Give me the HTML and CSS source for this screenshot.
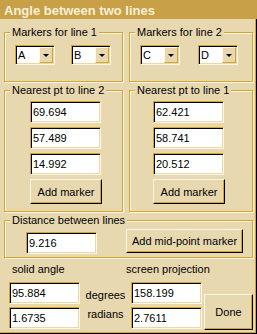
FILE: index.html
```html
<!DOCTYPE html>
<html lang="en">
<head>
    <meta charset="UTF-8">
    <meta name="viewport" content="width=device-width, initial-scale=1.0">
    <title>Angle between two lines</title>
    <link rel="stylesheet" href="styles.css">
</head>
<body>
    <div class="window">
        <div class="titlebar">Angle between two lines</div>

        <div class="row row-top">
            <fieldset class="group group-left markers">
                <legend>Markers for line 1</legend>
                <div class="combos">
                    <div class="combo"><span class="combo-value">A</span><span class="combo-btn"><span class="arrow"></span></span></div>
                    <div class="combo"><span class="combo-value">B</span><span class="combo-btn"><span class="arrow"></span></span></div>
                </div>
            </fieldset>
            <fieldset class="group group-right markers">
                <legend>Markers for line 2</legend>
                <div class="combos">
                    <div class="combo"><span class="combo-value">C</span><span class="combo-btn"><span class="arrow"></span></span></div>
                    <div class="combo"><span class="combo-value">D</span><span class="combo-btn"><span class="arrow"></span></span></div>
                </div>
            </fieldset>
        </div>

        <div class="row row-mid">
            <fieldset class="group group-left nearest">
                <legend>Nearest pt to line 2</legend>
                <div class="coords">
                    <input class="field" type="text" value="69.694">
                    <input class="field" type="text" value="57.489">
                    <input class="field" type="text" value="14.992">
                    <button class="btn btn-marker" type="button">Add marker</button>
                </div>
            </fieldset>
            <fieldset class="group group-right nearest">
                <legend>Nearest pt to line 1</legend>
                <div class="coords">
                    <input class="field" type="text" value="62.421">
                    <input class="field" type="text" value="58.741">
                    <input class="field" type="text" value="20.512">
                    <button class="btn btn-marker" type="button">Add marker</button>
                </div>
            </fieldset>
        </div>

        <div class="row row-mid">
            <fieldset class="group distance">
                <legend>Distance between lines</legend>
                <div class="distance-body">
                    <input class="field" type="text" value="9.216">
                    <button class="btn btn-mid" type="button">Add mid-point marker</button>
                </div>
            </fieldset>
        </div>

        <div class="angles">
            <div class="caption caption-solid">solid angle</div>
            <div></div>
            <div class="caption caption-screen">screen projection</div>

            <input class="field field-a1" type="text" value="95.884">
            <div class="unit unit-deg">degrees</div>
            <input class="field field-a2" type="text" value="158.199">

            <input class="field field-b1" type="text" value="1.6735">
            <div class="unit unit-rad">radians</div>
            <input class="field field-b2" type="text" value="2.7611">

            <button class="btn btn-done" type="button">Done</button>
        </div>
    </div>
</body>
</html>
```

FILE: styles.css
```css
body {
    margin: 0;
    font-family: "Liberation Sans", Arial, sans-serif;
    font-size: 11px;
    color: #000;
    background-color: #E8D8B0;
}

.window {
    width: 257px;
    height: 334px;
    box-sizing: border-box;
    background-color: #E8D8B0;
    box-shadow: inset -1px -1px 0 #000, inset -2px -2px 0 #D4A52A;
    overflow: hidden;
}

.titlebar {
    height: 19px;
    box-sizing: border-box;
    padding: 3px 0 0 4px;
    background-color: #C8A048;
    color: #F8F0D8;
    font-size: 13px;
    font-weight: bold;
    line-height: 16px;
}

.row {
    display: flex;
    gap: 6px;
    padding: 0 4px;
}

.row-top {
    margin-top: 7px;
}

.row-mid {
    margin-top: 2px;
}

/* etched group boxes */
.group {
    margin: 0;
    min-width: 0;
    box-sizing: border-box;
    border: 1px solid #D4A52A;
    box-shadow: inset 1px 1px 0 #FFF8E8, 1px 1px 0 #FFF8E8;
    padding: 0 5px;
}

.group legend {
    padding: 0 2px;
    line-height: 13px;
    background-color: #E8D8B0;
}

.group-left {
    width: 119px;
}

.group-right {
    width: 124px;
}

.markers {
    padding-top: 6px;
    padding-bottom: 16px;
}

.nearest {
    padding-top: 4px;
    padding-bottom: 7px;
}

.distance {
    width: 249px;
    padding-top: 2px;
    padding-bottom: 3px;
}

/* combo boxes */
.combos {
    display: flex;
    gap: 16px;
    padding-left: 5px;
}

.group-right .combos {
    gap: 18px;
}

.combo {
    width: 40px;
    height: 20px;
    box-sizing: border-box;
    display: flex;
    padding: 1px;
    background-color: #fff;
    border: 1px solid;
    border-color: #D4A52A #FFF8E8 #FFF8E8 #D4A52A;
    box-shadow: inset 1px 1px 0 #000, inset -1px -1px 0 #E8D8B0;
}

.combo-value {
    flex: 1;
    padding-left: 1px;
    line-height: 16px;
}

.combo-btn {
    width: 14px;
    box-sizing: border-box;
    display: flex;
    align-items: center;
    justify-content: center;
    background-color: #E8D8B0;
    border: 1px solid;
    border-color: #FFF8E8 #D4A52A #D4A52A #FFF8E8;
}

.arrow {
    width: 0;
    height: 0;
    border-left: 3px solid transparent;
    border-right: 3px solid transparent;
    border-top: 3px solid #000;
}

/* text fields */
.field {
    width: 71px;
    height: 22px;
    margin: 0;
    box-sizing: border-box;
    padding: 0 2px;
    font: inherit;
    color: #000;
    background-color: #fff;
    border: 1px solid;
    border-color: #D4A52A #FFF8E8 #FFF8E8 #D4A52A;
    box-shadow: inset 1px 1px 0 #000, inset -1px -1px 0 #E8D8B0;
    outline: none;
}

.coords {
    display: flex;
    flex-direction: column;
    align-items: flex-start;
    gap: 4px;
    padding-left: 20px;
}

.group-right .coords {
    padding-left: 18px;
}

/* buttons */
.btn {
    box-sizing: border-box;
    margin: 0;
    padding: 0;
    font: inherit;
    color: #000;
    background-color: #E8D8B0;
    border: 1px solid;
    border-color: #FFF8E8 #000 #000 #FFF8E8;
    box-shadow: inset -1px -1px 0 #D4A52A;
    cursor: pointer;
}

.btn-marker {
    width: 72px;
    height: 25px;
}

.distance-body {
    display: flex;
    align-items: flex-start;
    padding-left: 16px;
}

.distance-body .field {
    margin-top: 3px;
}

.btn-mid {
    width: 117px;
    height: 24px;
    margin-left: 29px;
}

/* angle readouts */
.angles {
    display: grid;
    grid-template-columns: 71px 51px 71px 2px 49px;
    grid-template-rows: 16px 22px 22px;
    row-gap: 3px;
    padding: 5px 0 0 9px;
}

.caption {
    line-height: 13px;
    white-space: nowrap;
}

.caption-solid {
    padding-left: 3px;
}

.caption-screen {
    margin-left: -5px;
}

.unit {
    text-align: center;
    line-height: 13px;
}

.unit-deg {
    margin-top: 7px;
}

.unit-rad {
    margin-top: 1px;
}

.field-a1 { grid-column: 1; grid-row: 2; }
.unit-deg { grid-column: 2; grid-row: 2; }
.field-a2 { grid-column: 3; grid-row: 2; }
.field-b1 { grid-column: 1; grid-row: 3; }
.unit-rad { grid-column: 2; grid-row: 3; }
.field-b2 { grid-column: 3; grid-row: 3; }

.btn-done {
    grid-column: 5;
    grid-row: 2 / span 2;
    align-self: start;
    width: 49px;
    height: 36px;
    margin-top: 12px;
}
```
